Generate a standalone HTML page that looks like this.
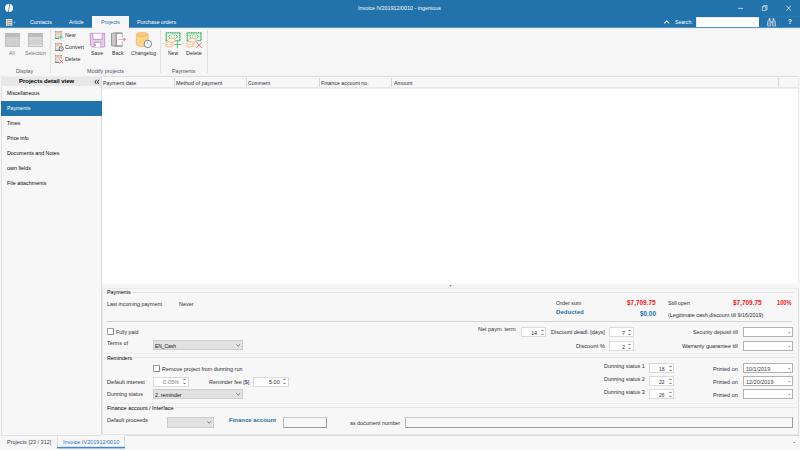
<!DOCTYPE html>
<html lang="en"><head><meta charset="utf-8"><title>Invoice IV201912/0010 - ingenious</title>
<style>
html,body{margin:0;padding:0;}
body{width:800px;height:450px;overflow:hidden;background:#f6f6f6;position:relative;font-family:"Liberation Sans",sans-serif;}
div,span,svg{position:absolute;box-sizing:border-box;}
.t{white-space:nowrap;line-height:10px;height:10px;transform-origin:0 50%;font-size:5.7px;}
svg{overflow:visible;}
</style></head>
<body>
<div style="left:0px;top:0px;width:800px;height:27px;background:#2272ab;"></div>
<div style="left:0px;top:27px;width:800px;height:1px;background:#5a96c1;"></div>
<svg style="left:5px;top:4px;width:8px;height:8px" viewBox="0 0 8 8"><circle cx="4" cy="4" r="4" fill="#fff"/><path d="M4.5 -0.2L5.25 -0.2L3.7 8.2L2.95 8.2Z" fill="#2272ab"/></svg>
<span class="t" style="left:358px;top:2.62px;color:#fff;transform:scaleX(0.9455);">Invoice IV201912/0010 - ingenious</span>
<svg style="left:735px;top:3px;width:60px;height:10px" viewBox="0 0 60 10"><path d="M3.1 5.4h5" stroke="#dbe8f2" stroke-width="0.8" fill="none"/><path d="M27.3 3.7h3.6v3.9h-3.6z M28.5 3.6v-1h3.6v3.9h-1" stroke="#e3edf5" stroke-width="0.7" fill="none"/><path d="M51.4 2.5l4.6 5.2M56 2.5l-4.6 5.2" stroke="#e3edf5" stroke-width="0.75" fill="none"/></svg>
<svg style="left:6px;top:19px;width:11px;height:7px" viewBox="0 0 11 7"><rect x="0" y="0" width="6.3" height="6.7" fill="#ebe7e3"/><path d="M1.3 0.4v6" stroke="#8a8a8a" stroke-width="0.6"/><path d="M2.2 1.5h3.4M2.2 3.4h3.4M2.2 5.3h3.4" stroke="#777" stroke-width="0.8"/><path d="M7.7 3h1.8l-0.9 1z" fill="#dfe9f2"/></svg>
<span class="t" style="left:30px;top:17.12px;color:#fff;transform:scaleX(0.9780);">Contacts</span>
<span class="t" style="left:68.75px;top:17.12px;color:#fff;transform:scaleX(0.9314);">Article</span>
<div style="left:92.4px;top:16px;width:36.6px;height:12.5px;background:#f6f6f6;"></div>
<span class="t" style="left:101px;top:17.12px;color:#2272ab;transform:scaleX(0.9227);">Projects</span>
<span class="t" style="left:136.9px;top:17.12px;color:#fff;transform:scaleX(0.9409);">Purchase orders</span>
<svg style="left:663px;top:19px;width:8px;height:6px" viewBox="0 0 8 6"><path d="M1.2 4.3l2.5-2.4 2.5 2.4" stroke="#fff" stroke-width="1.1" fill="none"/></svg>
<span class="t" style="left:675.3px;top:17.12px;color:#fff;transform:scaleX(0.9010);">Search:</span>
<div style="left:696.4px;top:17px;width:62.5px;height:9.8px;background:#fff;border-top:1px solid #efe4d8;border-left:1px solid #e4e4e4;"></div>
<div style="left:762px;top:16px;width:18px;height:12px;border:1px solid #2b79b2;border-bottom:none;"></div>
<div style="left:781px;top:16px;width:19px;height:12px;border:1px solid #2b79b2;border-bottom:none;border-right:none;"></div>
<svg style="left:766.6px;top:17.8px;width:9px;height:8.2px" viewBox="0 0 9 8.2"><path d="M1.7 0.3h1.6v2.2H1.7zM5.7 0.3h1.6v2.2H5.7z" fill="#dfe9f2"/><path d="M0.3 7.9l0.5-5h2.9v5zM5.3 7.9v-5h2.9l0.5 5z" fill="none" stroke="#e6eef6" stroke-width="0.65"/><path d="M1.2 4h1.6M1.2 5.4h1.6M1.2 6.8h1.6M6.2 4h1.6M6.2 5.4h1.6M6.2 6.8h1.6" stroke="#cfdfec" stroke-width="0.6"/><path d="M3.7 3.4h1.6v1.5H3.7z" fill="#c5d8e8"/></svg>
<span class="t" style="left:788.2px;top:16.67px;color:#fff;font-size:7px;font-weight:bold;transform:scaleX(0.9121);">?</span>
<div style="left:0px;top:28px;width:800px;height:48.5px;background:#f6f6f6;"></div>
<div style="left:0px;top:28px;width:92px;height:1px;background:#e9eff4;"></div>
<div style="left:129px;top:28px;width:671px;height:1px;background:#e9eff4;"></div>
<div style="left:0px;top:74.6px;width:800px;height:2.4px;background:linear-gradient(#f5f5f5,#ececec);"></div>
<div style="left:50px;top:30px;width:1px;height:43px;background:#e0e0e0;"></div>
<div style="left:160px;top:30px;width:1px;height:43px;background:#e0e0e0;"></div>
<div style="left:206.9px;top:30px;width:1px;height:43px;background:#e0e0e0;"></div>
<svg style="left:5px;top:33px;width:14.6px;height:14px" viewBox="0 0 14.6 14"><rect width="14.6" height="14" fill="#cdcdcd"/><rect width="14.6" height="3.4" fill="#bcbcbc"/><path d="M0 3.6h14.6" stroke="#b2b2b2" stroke-width="0.6"/><path d="M0.6 6.3h13.4M0.6 8.8h13.4M0.6 11.3h13.4M4 4v9.6M7.6 4v9.6M11.2 4v9.6" stroke="#dadada" stroke-width="0.5"/><rect x="0.3" y="0.3" width="14" height="13.4" fill="none" stroke="#b8b8b8" stroke-width="0.6"/></svg>
<svg style="left:27.9px;top:33px;width:14.6px;height:14px" viewBox="0 0 14.6 14"><rect width="14.6" height="14" fill="#cdcdcd"/><rect width="14.6" height="3.4" fill="#bcbcbc"/><path d="M0 3.6h14.6" stroke="#b2b2b2" stroke-width="0.6"/><path d="M1 5.2h12.6M1 12.4h12.6" stroke="#e4e4e4" stroke-width="1.3"/><path d="M0.6 6.3h13.4M0.6 8.8h13.4M0.6 11.3h13.4M4 4v9.6M7.6 4v9.6M11.2 4v9.6" stroke="#dadada" stroke-width="0.5"/><rect x="0.3" y="0.3" width="14" height="13.4" fill="none" stroke="#b8b8b8" stroke-width="0.6"/></svg>
<span class="t" style="left:9.4px;top:48.22px;color:#787878;transform:scaleX(0.8840);">All</span>
<span class="t" style="left:25px;top:48.22px;color:#787878;transform:scaleX(0.8956);">Selection</span>
<span class="t" style="left:15.9px;top:66.32px;color:#4e4e60;transform:scaleX(0.9149);">Display</span>
<svg style="left:54.8px;top:31.2px;width:9px;height:9px" viewBox="0 0 9 9"><rect x="0.4" y="0.4" width="6.4" height="6.8" fill="#fff" stroke="#8c8c8c" stroke-width="0.6"/><rect x="0.7" y="0.8" width="5.8" height="2.1" fill="#f8c49a"/><path d="M0.2 7.3h6.8" stroke="#4a4a4a" stroke-width="0.7"/><path d="M1.2 4h4.6" stroke="#999" stroke-width="0.6"/><path d="M1.2 5.5h2.4" stroke="#bbb" stroke-width="0.6"/><rect x="4.2" y="4.2" width="3.6" height="3.8" fill="#f6f6f6"/><path d="M5.85 3.5v4.9M3.6 5.95h4.5" stroke="#3fb365" stroke-width="0.85"/></svg>
<svg style="left:54.8px;top:43.2px;width:9px;height:9px" viewBox="0 0 9 9"><rect x="0.4" y="0.4" width="6.4" height="6.8" fill="#fff" stroke="#8c8c8c" stroke-width="0.6"/><rect x="0.7" y="0.8" width="5.8" height="2.1" fill="#f8c49a"/><path d="M0.2 7.3h6.8" stroke="#4a4a4a" stroke-width="0.7"/><path d="M1.2 4h4.6" stroke="#999" stroke-width="0.6"/><path d="M1.2 5.5h2.4" stroke="#bbb" stroke-width="0.6"/><circle cx="6.2" cy="5.8" r="2.1" fill="#f6f6f6" stroke="#444" stroke-width="0.7"/><path d="M6.1 4.7v1.3h1" stroke="#555" stroke-width="0.5" fill="none"/></svg>
<svg style="left:54.8px;top:55.2px;width:9px;height:9px" viewBox="0 0 9 9"><rect x="0.4" y="0.4" width="6.4" height="6.8" fill="#fff" stroke="#8c8c8c" stroke-width="0.6"/><rect x="0.7" y="0.8" width="5.8" height="2.1" fill="#f8c49a"/><path d="M0.2 7.3h6.8" stroke="#4a4a4a" stroke-width="0.7"/><path d="M1.2 4h4.6" stroke="#999" stroke-width="0.6"/><path d="M1.2 5.5h2.4" stroke="#bbb" stroke-width="0.6"/><rect x="4.4" y="4.6" width="3.6" height="3.6" fill="#f6f6f6"/><path d="M4.2 4.5l4 3.9M8.2 4.5l-4 3.9" stroke="#ee5f6d" stroke-width="0.9"/></svg>
<span class="t" style="left:65.2px;top:30.22px;color:#2e2e33;transform:scaleX(0.9208);">New</span>
<span class="t" style="left:65.2px;top:42.22px;color:#2e2e33;transform:scaleX(0.9520);">Convert</span>
<span class="t" style="left:65.2px;top:54.32px;color:#2e2e33;transform:scaleX(0.9407);">Delete</span>
<svg style="left:90px;top:32.6px;width:15px;height:14.4px" viewBox="0 0 15 14.4"><path d="M0.4 0.4h14.2v13.6H2.2L0.4 12.2z" fill="#e6cbe9" stroke="#c184c7" stroke-width="0.8"/><path d="M2.9 0.8v5.6h9.3V0.8" fill="#fff" stroke="#c184c7" stroke-width="0.8"/><path d="M4.3 14V9.4h6.5V14" fill="#fff" stroke="#c184c7" stroke-width="0.8"/><rect x="4.9" y="11.2" width="0.9" height="1.6" fill="#7a8f7a"/></svg>
<span class="t" style="left:90.9px;top:48.22px;color:#2e2e33;transform:scaleX(0.9390);">Save</span>
<svg style="left:110.8px;top:32.4px;width:16px;height:15px" viewBox="0 0 16 15"><rect x="5.4" y="1" width="5.8" height="13.1" fill="#fff"/><path d="M5.4 1.1H11.4M11.4 14H5.4" stroke="#555" stroke-width="0.95" fill="none"/><path d="M11.2 1V5.2M11.2 9.4V14.1" stroke="#9a9a9a" stroke-width="0.7" fill="none"/><path d="M0.5 1.5L5.3 0.7V14.4L0.5 13.7z" fill="#c8c8c8" stroke="#707070" stroke-width="0.6"/><path d="M5.4 0.2V14.9" stroke="#8a8a8a" stroke-width="0.6"/><path d="M7.7 7.5H13" stroke="#f58d96" stroke-width="0.8" fill="none"/><path d="M12.6 5.4L15.2 7.5L12.6 9.6z" fill="#f47a84"/></svg>
<span class="t" style="left:112.4px;top:48.22px;color:#2e2e33;transform:scaleX(0.9075);">Back</span>
<svg style="left:136px;top:31.8px;width:16.5px;height:16.5px" viewBox="0 0 16.5 16.5"><path d="M0.3 2.4v9.8c0 1.3 2.6 2.2 5.9 2.2s5.9-0.9 5.9-2.2V2.4z" fill="#f7d58a" stroke="#eea85a" stroke-width="0.6"/><ellipse cx="6.2" cy="2.4" rx="5.9" ry="2" fill="#f9c980" stroke="#eea85a" stroke-width="0.6"/><circle cx="11.9" cy="12" r="3.7" fill="#fff" stroke="#666" stroke-width="0.8"/><path d="M11.5 9.8l0.4 2.4 1.5 1.3" stroke="#4a90d9" stroke-width="0.6" fill="none"/></svg>
<span class="t" style="left:130.9px;top:48.22px;color:#2e2e33;transform:scaleX(0.9139);">Changelog</span>
<span class="t" style="left:86.9px;top:66.32px;color:#4e4e60;transform:scaleX(0.9653);">Modify projects</span>
<svg style="left:165px;top:31.8px;width:17px;height:16.5px" viewBox="0 0 17 16.5"><rect x="1.3" y="0.8" width="13.6" height="7.8" fill="#f4fbf6" stroke="#8fd3a4" stroke-width="1.3"/><rect x="1.3" y="0.8" width="13.6" height="7.8" fill="none" stroke="#4db56f" stroke-width="1.3" stroke-dasharray="0.9 0.9"/><ellipse cx="8.1" cy="4.4" rx="1.5" ry="2.3" fill="#fff" stroke="#7fcb97" stroke-width="0.7"/><path d="M5.6 2.6L3.6 4.6l2 2M10.6 2.6l2 2-2 2" stroke="#4fb872" stroke-width="1" fill="none"/><ellipse cx="4.2" cy="13.4" rx="3.9" ry="1.6" fill="#fdeee2" stroke="#f1a772" stroke-width="0.7"/><ellipse cx="4.2" cy="11.4" rx="3.9" ry="1.6" fill="#fdeee2" stroke="#f1a772" stroke-width="0.7"/><ellipse cx="6.4" cy="8.3" rx="3.9" ry="2" fill="#fdeee2" stroke="#f1a772" stroke-width="0.7"/><path d="M4.4 8.1h4M2.2 11.3h3.6M2.2 13.4h3.6" stroke="#fff" stroke-width="0.9"/><path d="M12.4 9v7.2M9.1 12.5h7.4" stroke="#44b468" stroke-width="0.8"/></svg>
<svg style="left:186px;top:31.8px;width:17px;height:16.5px" viewBox="0 0 17 16.5"><rect x="1.3" y="0.8" width="13.6" height="7.8" fill="#f4fbf6" stroke="#8fd3a4" stroke-width="1.3"/><rect x="1.3" y="0.8" width="13.6" height="7.8" fill="none" stroke="#4db56f" stroke-width="1.3" stroke-dasharray="0.9 0.9"/><ellipse cx="8.1" cy="4.4" rx="1.5" ry="2.3" fill="#fff" stroke="#7fcb97" stroke-width="0.7"/><path d="M5.6 2.6L3.6 4.6l2 2M10.6 2.6l2 2-2 2" stroke="#4fb872" stroke-width="1" fill="none"/><ellipse cx="4.2" cy="13.4" rx="3.9" ry="1.6" fill="#fdeee2" stroke="#f1a772" stroke-width="0.7"/><ellipse cx="4.2" cy="11.4" rx="3.9" ry="1.6" fill="#fdeee2" stroke="#f1a772" stroke-width="0.7"/><ellipse cx="6.4" cy="8.3" rx="3.9" ry="2" fill="#fdeee2" stroke="#f1a772" stroke-width="0.7"/><path d="M4.4 8.1h4M2.2 11.3h3.6M2.2 13.4h3.6" stroke="#fff" stroke-width="0.9"/><path d="M10.4 10.2l5.6 5.8M16 10.2l-5.6 5.8" stroke="#ee6272" stroke-width="0.9"/></svg>
<span class="t" style="left:167.8px;top:48.22px;color:#2e2e33;transform:scaleX(0.8770);">New</span>
<span class="t" style="left:186px;top:48.22px;color:#2e2e33;transform:scaleX(0.9528);">Delete</span>
<span class="t" style="left:171.7px;top:66.32px;color:#4e4e60;transform:scaleX(0.9193);">Payments</span>
<div style="left:1px;top:77px;width:100px;height:359px;background:#f7f7f7;border-left:1px solid #e3e3e3;border-bottom:1px solid #e0e0e0;"></div>
<div style="left:1.4px;top:77px;width:99.6px;height:8.8px;background:#e7e7e7;"></div>
<span class="t" style="left:19px;top:76.02px;color:#000;font-weight:bold;transform:scaleX(1.0452);">Projects detail view</span>
<svg style="left:94px;top:78.6px;width:6px;height:6px" viewBox="0 0 6 6"><path d="M2.6 0.8L0.9 3l1.7 2.2M5 0.8L3.3 3 5 5.2" stroke="#1c1c1c" stroke-width="0.95" fill="none"/></svg>
<div style="left:1px;top:101.2px;width:100.6px;height:14.6px;background:#2272ab;"></div>
<span class="t" style="left:6.7px;top:88.42px;color:#08080c;transform:scaleX(0.9026);">Miscellaneous</span>
<span class="t" style="left:6.7px;top:103.42px;color:#fff;transform:scaleX(0.9193);">Payments</span>
<span class="t" style="left:6.7px;top:118.42px;color:#08080c;transform:scaleX(0.8690);">Times</span>
<span class="t" style="left:6.7px;top:133.42px;color:#08080c;transform:scaleX(0.9175);">Price info</span>
<span class="t" style="left:6.7px;top:148.42px;color:#08080c;transform:scaleX(0.9309);">Documents and Notes</span>
<span class="t" style="left:6.7px;top:163.42px;color:#08080c;transform:scaleX(0.9469);">own fields</span>
<span class="t" style="left:6.7px;top:178.42px;color:#08080c;transform:scaleX(0.9446);">File attachments</span>
<div style="left:101px;top:76px;width:698px;height:207px;background:#fff;border-left:1px solid #dcdcdc;border-top:1px solid #dedede;border-right:1px solid #ececec;"></div>
<div style="left:102px;top:77px;width:696px;height:12px;background:linear-gradient(#f7f7f7 0,#f7f7f7 10px,#e8e8e8 10px,#e8e8e8 11px,#efefef 11px,#efefef 12px);"></div>
<span class="t" style="left:103px;top:77.52px;color:#2c2c38;transform:scaleX(0.9496);">Payment date</span>
<span class="t" style="left:176px;top:77.52px;color:#2c2c38;transform:scaleX(0.9509);">Method of payment</span>
<span class="t" style="left:248.3px;top:77.52px;color:#2c2c38;transform:scaleX(0.8945);">Comment</span>
<span class="t" style="left:321px;top:77.52px;color:#2c2c38;transform:scaleX(0.9312);">Finance account no.</span>
<span class="t" style="left:393.8px;top:77.52px;color:#2c2c38;transform:scaleX(0.9417);">Amount</span>
<div style="left:173.9px;top:78px;width:1px;height:9.2px;background:#d6d6d6;"></div>
<div style="left:246.2px;top:78px;width:1px;height:9.2px;background:#d6d6d6;"></div>
<div style="left:318.6px;top:78px;width:1px;height:9.2px;background:#d6d6d6;"></div>
<div style="left:391px;top:78px;width:1px;height:9.2px;background:#d6d6d6;"></div>
<div style="left:778px;top:78px;width:1px;height:9.2px;background:#d6d6d6;"></div>
<div style="left:101px;top:101.2px;width:0.7px;height:14.6px;background:#2272ab;"></div>
<div style="left:102px;top:283px;width:697px;height:6px;background:linear-gradient(#f8f8f8,#f1f1f1);"></div>
<div style="left:101px;top:283px;width:1px;height:6px;background:#dadada;"></div>
<svg style="left:448.6px;top:284.6px;width:3px;height:2px" viewBox="0 0 3 2"><path d="M0.2 0.3h2.6L1.5 1.7z" fill="#6a6a6a"/></svg>
<div style="left:101px;top:288px;width:698px;height:147px;background:#f7f7f7;border-left:1px solid #d6d6d6;border-top:1px solid #ebebeb;border-right:1px solid #dedede;border-bottom:1px solid #e4e4e4;"></div>
<div style="left:102px;top:289px;width:1px;height:145px;background:#e6e6e6;"></div>
<div style="left:103.5px;top:292.1px;width:2.5px;height:0.8px;background:#e8e8e8;"></div>
<div style="left:131.5px;top:292.1px;width:664.5px;height:0.8px;background:#e6e6e6;"></div>
<div style="left:107px;top:320.6px;width:685px;height:0.8px;background:#d2d2d2;"></div>
<div style="left:102.5px;top:353.2px;width:696px;height:0.8px;background:#ededed;"></div>
<div style="left:103.5px;top:357.1px;width:2.5px;height:0.8px;background:#e8e8e8;"></div>
<div style="left:133px;top:357.1px;width:664px;height:0.8px;background:#e6e6e6;"></div>
<div style="left:102.5px;top:402.9px;width:696px;height:0.8px;background:#ededed;"></div>
<div style="left:103.5px;top:407.1px;width:2.5px;height:0.8px;background:#e8e8e8;"></div>
<div style="left:174.5px;top:407.1px;width:622.5px;height:0.8px;background:#e6e6e6;"></div>
<span class="t" style="left:106.8px;top:287.32px;color:#000;transform:scaleX(0.9391);">Payments</span>
<span class="t" style="left:106.9px;top:299.02px;color:#2e2e33;transform:scaleX(0.9383);">Last incoming payment</span>
<span class="t" style="left:179px;top:299.02px;color:#2e2e33;transform:scaleX(0.9536);">Never</span>
<span class="t" style="left:555.6px;top:298.02px;color:#2e2e33;transform:scaleX(0.9434);">Order sum</span>
<span class="t" style="left:627px;top:297.78px;color:#ee1620;font-size:6.4px;font-weight:bold;transform:scaleX(1.0045);">$7,709.75</span>
<span class="t" style="left:668px;top:298.02px;color:#2e2e33;transform:scaleX(0.9382);">Still open</span>
<span class="t" style="left:733px;top:297.78px;color:#ee1620;font-size:6.4px;font-weight:bold;transform:scaleX(1.0045);">$7,709.75</span>
<span class="t" style="left:776.6px;top:297.78px;color:#ee1620;font-size:6.4px;font-weight:bold;transform:scaleX(0.8797);">100%</span>
<span class="t" style="left:555.6px;top:306.52px;color:#2272ab;font-weight:bold;transform:scaleX(1.0704);">Deducted</span>
<span class="t" style="left:639.6px;top:309.48px;color:#2272ab;font-size:6.4px;font-weight:bold;transform:scaleX(0.9990);">$0.00</span>
<span class="t" style="left:668px;top:309.62px;color:#2e2e33;transform:scaleX(0.9518);">(Legitimate cash discount till 9/16/2019)</span>
<div style="left:107px;top:328.4px;width:7px;height:7px;background:#fff;border:1px solid #a0a0a0;border-bottom-color:#8a8a8a;border-right-color:#8a8a8a;border-radius:1px;"></div>
<span class="t" style="left:116.4px;top:326.72px;color:#2e2e33;transform:scaleX(0.9264);">Fully paid</span>
<span class="t" style="left:107px;top:338.02px;color:#2e2e33;transform:scaleX(0.9609);">Terms of</span>
<div style="left:153px;top:340px;width:89.7px;height:10.4px;background:#e1e1e1;border:1px solid #cdcdcd;"></div>
<svg style="left:236px;top:343.9px;width:4.4px;height:2.6px" viewBox="0 0 4.4 2.6"><path d="M0.3 0.4L2.2 2.2 4.1 0.4" stroke="#4a4a4a" stroke-width="0.7" fill="none"/></svg>
<span class="t" style="left:155px;top:340.62px;color:#111;transform:scaleX(0.8608);">EN_Cash</span>
<span class="t" style="left:478.4px;top:324.22px;color:#2e2e33;transform:scaleX(0.9651);">Net paym. term</span>
<div style="left:521.4px;top:327.2px;width:24.8px;height:10px;background:#fff;border:1px solid #dadada;"></div>
<svg style="left:540.8px;top:328.8px;width:3px;height:7px" viewBox="0 0 3 7"><path d="M0.5 2L1.5 0.9 2.5 2M0.5 4.9L1.5 6 2.5 4.9" stroke="#333" stroke-width="0.75" fill="none"/></svg>
<span class="t" style="left:531.282px;top:327.62px;color:#2e2e33;transform:scaleX(0.9649);">14</span>
<span class="t" style="left:551px;top:327.02px;color:#2e2e33;transform:scaleX(0.9629);">Discount deadl. [days]</span>
<div style="left:609px;top:327.2px;width:24.6px;height:10px;background:#fff;border:1px solid #dadada;"></div>
<svg style="left:628.2px;top:328.8px;width:3px;height:7px" viewBox="0 0 3 7"><path d="M0.5 2L1.5 0.9 2.5 2M0.5 4.9L1.5 6 2.5 4.9" stroke="#333" stroke-width="0.75" fill="none"/></svg>
<span class="t" style="left:621.741px;top:327.62px;color:#2e2e33;transform:scaleX(0.9649);">7</span>
<span class="t" style="left:576px;top:341.42px;color:#2e2e33;transform:scaleX(1.0059);">Discount %</span>
<div style="left:608.8px;top:341.4px;width:24.8px;height:10px;background:#fff;border:1px solid #dadada;"></div>
<svg style="left:628.2px;top:343px;width:3px;height:7px" viewBox="0 0 3 7"><path d="M0.5 2L1.5 0.9 2.5 2M0.5 4.9L1.5 6 2.5 4.9" stroke="#333" stroke-width="0.75" fill="none"/></svg>
<span class="t" style="left:621.741px;top:341.82px;color:#2e2e33;transform:scaleX(0.9649);">2</span>
<span class="t" style="left:692.7px;top:326.82px;color:#2e2e33;transform:scaleX(0.9469);">Security deposit till</span>
<div style="left:743px;top:327.2px;width:49.7px;height:10px;background:#fff;border:1px solid #b2b2b2;"></div>
<svg style="left:787.5px;top:331.6px;width:2.4px;height:1.6px" viewBox="0 0 3 2"><path d="M0.2 0.3h2.6L1.5 1.7z" fill="#444"/></svg>
<span class="t" style="left:681.8px;top:341.32px;color:#2e2e33;transform:scaleX(0.9784);">Warranty guarantee till</span>
<div style="left:743px;top:341.4px;width:49.7px;height:10px;background:#fff;border:1px solid #b2b2b2;"></div>
<svg style="left:787.5px;top:345.8px;width:2.4px;height:1.6px" viewBox="0 0 3 2"><path d="M0.2 0.3h2.6L1.5 1.7z" fill="#444"/></svg>
<span class="t" style="left:106.9px;top:352.62px;color:#000;transform:scaleX(0.9107);">Reminders</span>
<div style="left:153px;top:365px;width:7px;height:7px;background:#fff;border:1px solid #a0a0a0;border-bottom-color:#8a8a8a;border-right-color:#8a8a8a;border-radius:1px;"></div>
<span class="t" style="left:162px;top:363.62px;color:#2e2e33;transform:scaleX(0.9528);">Remove project from dunning run</span>
<span class="t" style="left:107px;top:376.62px;color:#2e2e33;transform:scaleX(0.9912);">Default interest</span>
<div style="left:153px;top:376.6px;width:35.7px;height:10px;background:#fff;border:1px solid #dadada;"></div>
<svg style="left:183.3px;top:378.2px;width:3px;height:7px" viewBox="0 0 3 7"><path d="M0.5 2L1.5 0.9 2.5 2M0.5 4.9L1.5 6 2.5 4.9" stroke="#333" stroke-width="0.75" fill="none"/></svg>
<span class="t" style="left:163px;top:377.02px;color:#808080;transform:scaleX(1.0023);">0.05%</span>
<span class="t" style="left:208.6px;top:376.62px;color:#2e2e33;transform:scaleX(0.9587);">Reminder fee [$]</span>
<div style="left:253px;top:376.6px;width:35.7px;height:10px;background:#fff;border:1px solid #dadada;"></div>
<svg style="left:283.3px;top:378.2px;width:3px;height:7px" viewBox="0 0 3 7"><path d="M0.5 2L1.5 0.9 2.5 2M0.5 4.9L1.5 6 2.5 4.9" stroke="#333" stroke-width="0.75" fill="none"/></svg>
<span class="t" style="left:269.195px;top:377.02px;color:#2e2e33;transform:scaleX(0.9649);">5.00</span>
<span class="t" style="left:107px;top:389.02px;color:#2e2e33;transform:scaleX(0.9468);">Dunning status</span>
<div style="left:153px;top:389.1px;width:89.7px;height:10.4px;background:#e1e1e1;border:1px solid #cdcdcd;"></div>
<svg style="left:236px;top:393px;width:4.4px;height:2.6px" viewBox="0 0 4.4 2.6"><path d="M0.3 0.4L2.2 2.2 4.1 0.4" stroke="#4a4a4a" stroke-width="0.7" fill="none"/></svg>
<span class="t" style="left:155px;top:389.82px;color:#111;transform:scaleX(0.9227);">2. reminder</span>
<span class="t" style="left:603.5px;top:361.22px;color:#2e2e33;transform:scaleX(0.9538);">Dunning status 1</span>
<div style="left:649.3px;top:363.3px;width:25px;height:10px;background:#fff;border:1px solid #dadada;"></div>
<svg style="left:668.9px;top:364.9px;width:3px;height:7px" viewBox="0 0 3 7"><path d="M0.5 2L1.5 0.9 2.5 2M0.5 4.9L1.5 6 2.5 4.9" stroke="#333" stroke-width="0.75" fill="none"/></svg>
<span class="t" style="left:659.3px;top:363.72px;color:#2e2e33;transform:scaleX(0.8675);">18</span>
<span class="t" style="left:713px;top:363.52px;color:#2e2e33;transform:scaleX(0.9506);">Printed on</span>
<div style="left:743px;top:363.3px;width:49.7px;height:10px;background:#fff;border:1px solid #b2b2b2;"></div>
<svg style="left:787.5px;top:367.7px;width:2.4px;height:1.6px" viewBox="0 0 3 2"><path d="M0.2 0.3h2.6L1.5 1.7z" fill="#444"/></svg>
<span class="t" style="left:603.5px;top:374.12px;color:#2e2e33;transform:scaleX(0.9538);">Dunning status 2</span>
<div style="left:649.3px;top:376.4px;width:25px;height:10px;background:#fff;border:1px solid #dadada;"></div>
<svg style="left:668.9px;top:378px;width:3px;height:7px" viewBox="0 0 3 7"><path d="M0.5 2L1.5 0.9 2.5 2M0.5 4.9L1.5 6 2.5 4.9" stroke="#333" stroke-width="0.75" fill="none"/></svg>
<span class="t" style="left:659.3px;top:376.82px;color:#2e2e33;transform:scaleX(0.8675);">22</span>
<span class="t" style="left:713px;top:376.52px;color:#2e2e33;transform:scaleX(0.9506);">Printed on</span>
<div style="left:743px;top:376.4px;width:49.7px;height:10px;background:#fff;border:1px solid #b2b2b2;"></div>
<svg style="left:787.5px;top:380.8px;width:2.4px;height:1.6px" viewBox="0 0 3 2"><path d="M0.2 0.3h2.6L1.5 1.7z" fill="#444"/></svg>
<span class="t" style="left:603.5px;top:387.12px;color:#2e2e33;transform:scaleX(0.9538);">Dunning status 3</span>
<div style="left:649.3px;top:389.4px;width:25px;height:10px;background:#fff;border:1px solid #dadada;"></div>
<svg style="left:668.9px;top:391px;width:3px;height:7px" viewBox="0 0 3 7"><path d="M0.5 2L1.5 0.9 2.5 2M0.5 4.9L1.5 6 2.5 4.9" stroke="#333" stroke-width="0.75" fill="none"/></svg>
<span class="t" style="left:659.3px;top:389.82px;color:#2e2e33;transform:scaleX(0.8675);">26</span>
<span class="t" style="left:713px;top:389.52px;color:#2e2e33;transform:scaleX(0.9506);">Printed on</span>
<div style="left:743px;top:389.4px;width:49.7px;height:10px;background:#fff;border:1px solid #b2b2b2;"></div>
<svg style="left:787.5px;top:393.8px;width:2.4px;height:1.6px" viewBox="0 0 3 2"><path d="M0.2 0.3h2.6L1.5 1.7z" fill="#444"/></svg>
<span class="t" style="left:745.5px;top:363.52px;color:#3a3a44;transform:scaleX(0.9543);">10/1/2019</span>
<span class="t" style="left:745.5px;top:376.62px;color:#3a3a44;transform:scaleX(0.9639);">12/20/2019</span>
<span class="t" style="left:106.9px;top:402.62px;color:#000;transform:scaleX(0.9701);">Finance account / Interface</span>
<span class="t" style="left:107px;top:415.02px;color:#2e2e33;transform:scaleX(0.9514);">Default proceeds</span>
<div style="left:167px;top:417.3px;width:47px;height:10.4px;background:#e1e1e1;border:1px solid #cdcdcd;"></div>
<svg style="left:207.3px;top:421.2px;width:4.4px;height:2.6px" viewBox="0 0 4.4 2.6"><path d="M0.3 0.4L2.2 2.2 4.1 0.4" stroke="#4a4a4a" stroke-width="0.7" fill="none"/></svg>
<span class="t" style="left:229.4px;top:415.02px;color:#2272ab;font-weight:bold;transform:scaleX(1.0494);">Finance account</span>
<div style="left:283px;top:417.3px;width:44px;height:10.4px;background:#f7f7f7;border:1px solid #9c9c9c;border-top-color:#cccccc;border-left-color:#b8b8b8;"></div>
<span class="t" style="left:349.5px;top:417.52px;color:#2e2e33;transform:scaleX(0.9375);">as document number</span>
<div style="left:405.2px;top:417.3px;width:388px;height:10.4px;background:#f7f7f7;border:1px solid #9c9c9c;border-top-color:#cccccc;border-left-color:#b8b8b8;"></div>
<div style="left:0px;top:435.5px;width:800px;height:14.5px;background:#f7f7f7;"></div>
<span class="t" style="left:7px;top:436.62px;color:#444;transform:scaleX(0.9664);">Projects [23 / 312]</span>
<div style="left:57px;top:436px;width:68px;height:12px;border-left:1px solid #e2e2e2;border-right:1px solid #dcdcdc;"></div>
<div style="left:125px;top:435px;width:675px;height:1px;background:#dcdcdc;"></div>
<div style="left:57px;top:447px;width:68px;height:1px;background:#4289cb;"></div>
<div style="left:57px;top:448px;width:68px;height:1px;background:#a5c6e4;"></div>
<div style="left:57px;top:446px;width:68px;height:1px;background:#d5e3f0;"></div>
<span class="t" style="left:63px;top:436.62px;color:#2a78c0;transform:scaleX(0.9672);">Invoice IV201912/0010</span>
<svg style="left:792.8px;top:441.6px;width:2.4px;height:1.6px" viewBox="0 0 3 2"><path d="M0.2 0.3h2.6L1.5 1.7z" fill="#444"/></svg>
</body></html>
